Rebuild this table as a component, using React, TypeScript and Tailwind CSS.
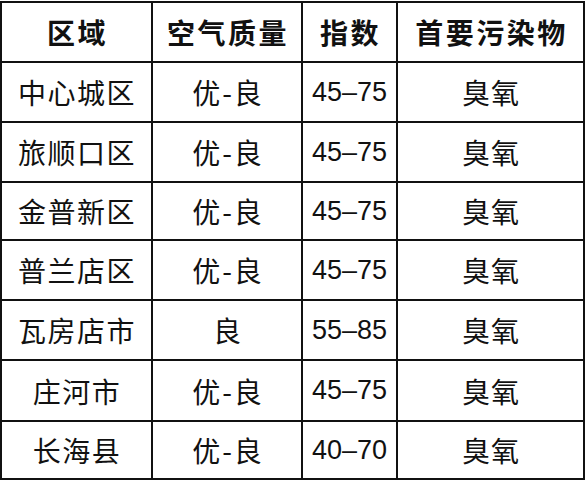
const rows: [string, string, string, string][] = [
  ['中心城区', '优-良', '45–75', '臭氧'],
  ['旅顺口区', '优-良', '45–75', '臭氧'],
  ['金普新区', '优-良', '45–75', '臭氧'],
  ['普兰店区', '优-良', '45–75', '臭氧'],
  ['瓦房店市', '良', '55–85', '臭氧'],
  ['庄河市', '优-良', '45–75', '臭氧'],
  ['长海县', '优-良', '40–70', '臭氧'],
];

const cjk = "font-['Microsoft_YaHei','Noto_Sans_CJK_SC',sans-serif] text-[28px]";
const num = "font-['Liberation_Sans','Noto_Sans_CJK_SC',sans-serif] text-[27px]";
const cell = 'flex items-center justify-center border-r-2 border-b-2 border-[#111] leading-none text-[#111]';

export default function App() {
  return (
    <div className="w-[587px] h-[482px] bg-white pt-px">
      <div className="grid w-[585px] grid-cols-[151px_150px_95px_187px] grid-rows-[60px_60px_60px_58px_60px_60px_61px_58px] border-l-2 border-t-2 border-[#111]">
        {['区域', '空气质量', '指数', '首要污染物'].map((h) => (
          <div key={h} className={`${cell} ${cjk} font-bold tracking-[2.5px] pl-[2px]`}>
            {h}
          </div>
        ))}
        {rows.map((r) => (
          <>
            <div key={r[0] + 'a'} className={`${cell} ${cjk} tracking-[1.5px] pl-[1px]`}>{r[0]}</div>
            <div key={r[0] + 'b'} className={`${cell} ${cjk} tracking-[2px] pl-[2px]`}>{r[1]}</div>
            <div key={r[0] + 'c'} className={`${cell} ${num}`}>{r[2]}</div>
            <div key={r[0] + 'd'} className={`${cell} ${cjk} tracking-[1px] pl-[1px]`}>{r[3]}</div>
          </>
        ))}
      </div>
    </div>
  );
}
